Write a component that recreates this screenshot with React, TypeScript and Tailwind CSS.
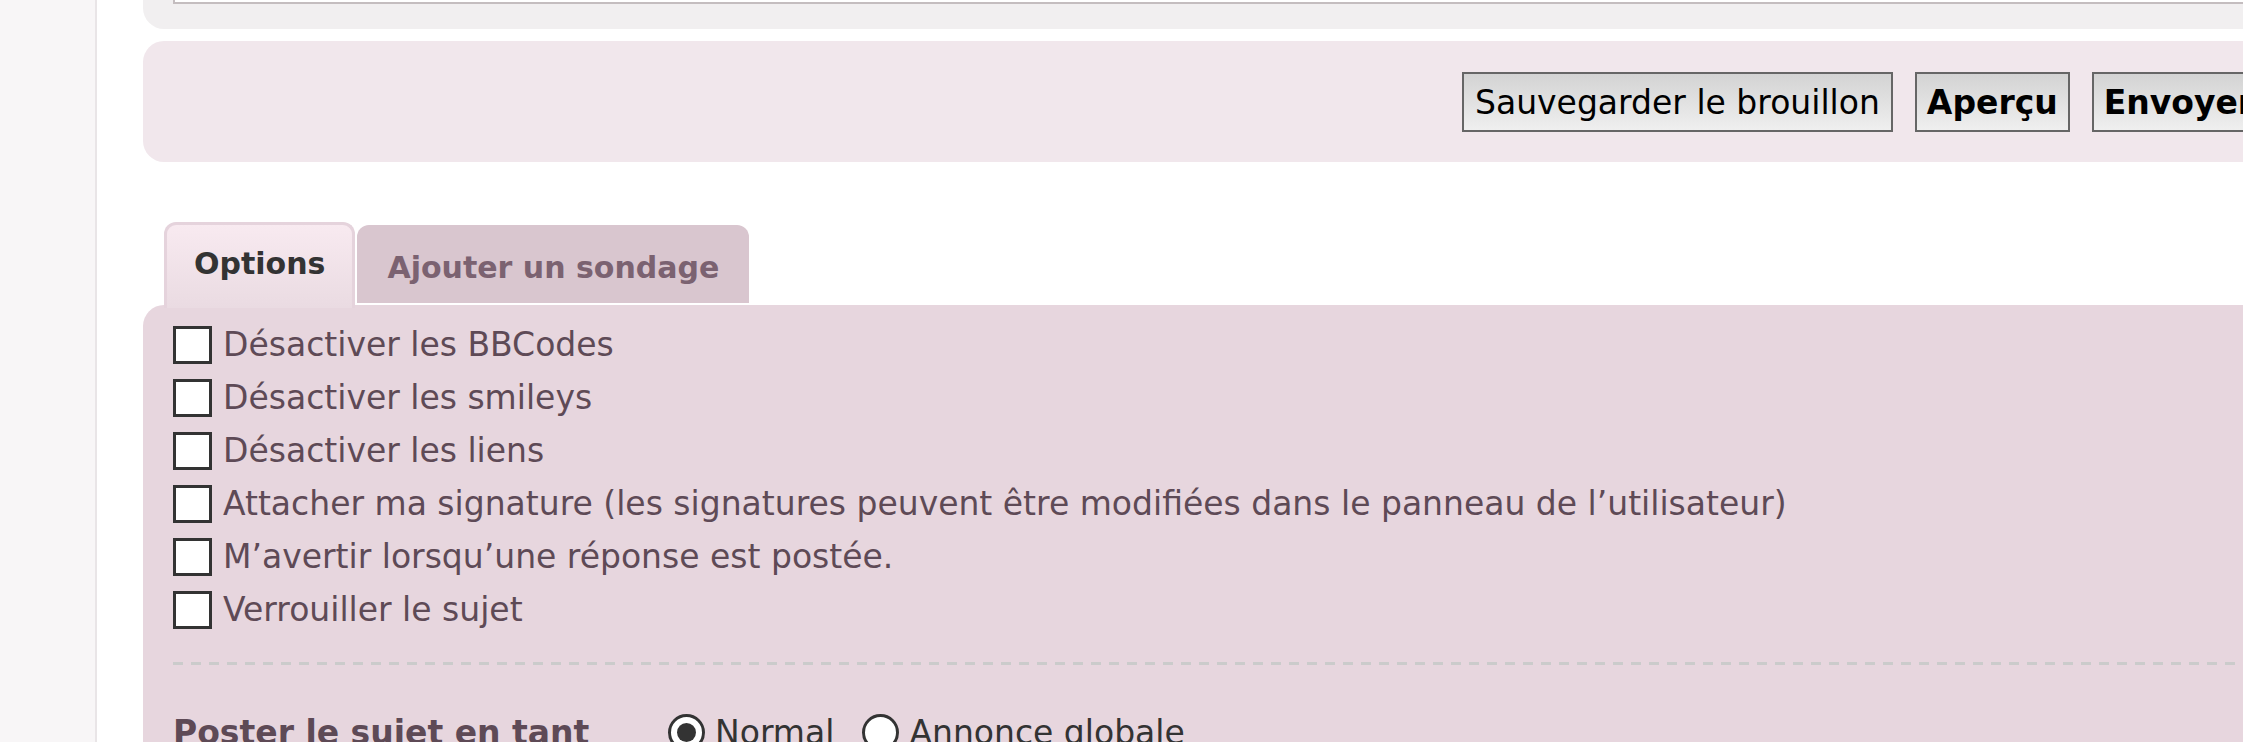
import { useState } from "react";

const options = [
  "Désactiver les BBCodes",
  "Désactiver les smileys",
  "Désactiver les liens",
  "Attacher ma signature (les signatures peuvent être modifiées dans le panneau de l’utilisateur)",
  "M’avertir lorsqu’une réponse est postée.",
  "Verrouiller le sujet",
];

const topicTypes = ["Normal", "Annonce globale"];

export default function App() {
  const [checked, setChecked] = useState<boolean[]>(options.map(() => false));
  const [topicType, setTopicType] = useState("Normal");

  const toggle = (i: number) => {
    setChecked((prev) => prev.map((v, idx) => (idx === i ? !v : v)));
  };

  return (
    <div className="flex w-full h-screen overflow-hidden bg-white font-['DejaVu_Sans',sans-serif]">
      {/* left column */}
      <div className="w-[97px] shrink-0 bg-[#f8f6f7] border-r-2 border-[#e9e5e7]" />

      <div className="flex-1 min-w-0 pl-[46px]">
        {/* editor panel (bottom edge only) */}
        <div className="h-[29px] rounded-bl-[21px] bg-[#f1eff0] pl-[30px]">
          <div className="h-[4px] bg-white border-l-2 border-b-2 border-[#c4bdbf]" />
        </div>

        {/* submit buttons */}
        <div className="mt-[12px] h-[121px] rounded-l-[21px] bg-[#f1e7ec] flex items-center gap-[22px] pl-[1319px]">
          <button className="shrink-0 h-[60px] px-[11px] pt-[2px] border-2 border-[#666] bg-gradient-to-b from-[#d3d3d3] to-[#efefef] text-[33px] leading-none text-black whitespace-nowrap">
            Sauvegarder le brouillon
          </button>
          <button className="shrink-0 h-[60px] px-[10px] pt-[2px] border-2 border-[#666] bg-gradient-to-b from-[#d3d3d3] to-[#efefef] text-[33px] leading-none font-bold text-black whitespace-nowrap">
            Aperçu
          </button>
          <button className="shrink-0 h-[60px] px-[10px] pt-[2px] border-2 border-[#666] bg-gradient-to-b from-[#d3d3d3] to-[#efefef] text-[33px] leading-none font-bold text-black whitespace-nowrap">
            Envoyer
          </button>
        </div>

        {/* tabs */}
        <div className="mt-[60px] flex items-start h-[83px] pl-[21px] gap-[2px]">
          <div className="relative z-10 h-[86px] border-[3px] border-b-0 border-[#e5d3dc] rounded-t-[12px] bg-gradient-to-b from-[#f8eaf0] to-[#eadbe2] px-[27px] pt-[16px] text-[30px] font-bold text-[#333] whitespace-nowrap">
            Options
          </div>
          <div className="mt-[3px] h-[78px] rounded-t-[12px] bg-[#d9c6cf] px-[30px] pt-[20px] text-[30px] font-bold text-[#7b6271] whitespace-nowrap">
            Ajouter un sondage
          </div>
        </div>

        {/* options panel */}
        <div className="h-[600px] rounded-tl-[21px] bg-[#e7d6de] pl-[30px] pt-[13px]">
          {options.map((label, i) => (
            <label key={label} className="flex items-center h-[53px] gap-[11px] text-[33px] text-[#5e4a56] whitespace-nowrap">
              <input
                type="checkbox"
                checked={checked[i]}
                onChange={() => toggle(i)}
                className="appearance-none m-0 shrink-0 w-[39px] h-[38px] border-[3px] border-[#333] bg-white"
              />
              {label}
            </label>
          ))}

          {/* dashed separator */}
          <div className="mt-[26px] h-[3px] bg-[repeating-linear-gradient(to_right,#cbcbcb_0_10px,transparent_10px_18px)]" />

          <div className="mt-[43px] flex items-start">
            <div className="w-[495px] shrink-0 text-[33px] font-bold text-[#5e4a56] whitespace-nowrap">
              Poster le sujet en tant
            </div>
            <div className="flex items-start gap-[28px]">
              {topicTypes.map((t) => (
                <label key={t} className="flex items-start gap-[10px] text-[33px] text-[#333] whitespace-nowrap" onClick={() => setTopicType(t)}>
                  <span className="mt-[6px] w-[37px] h-[37px] rounded-full border-[3px] border-[#333] bg-white flex items-center justify-center">
                    {topicType === t && <span className="w-[19px] h-[19px] rounded-full bg-[#333]" />}
                  </span>
                  {t}
                </label>
              ))}
            </div>
          </div>
        </div>
      </div>
    </div>
  );
}
